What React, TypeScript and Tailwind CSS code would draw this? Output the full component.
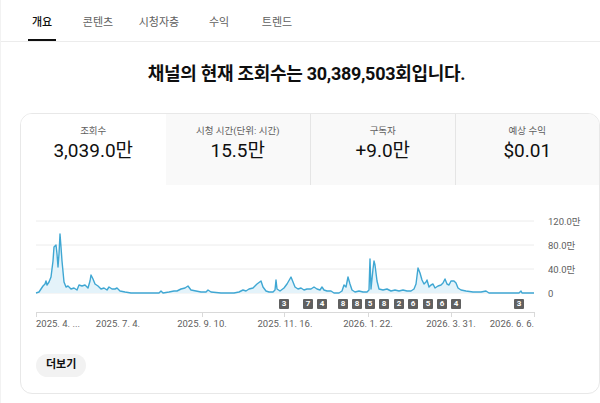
import React from "react";

const FONT = { fontFamily: 'Roboto, "Noto Sans CJK KR", "Noto Sans", sans-serif' };

const TABS = [
  { label: "개요", w: "w-[56px]", active: true },
  { label: "콘텐츠", w: "w-[56px]" },
  { label: "시청자층", w: "w-[66px]" },
  { label: "수익", w: "w-[54px]" },
  { label: "트렌드", w: "w-[62px]" },
];

const METRICS = [
  { label: "조회수", value: "3,039.0만", active: true },
  { label: "시청 시간(단위: 시간)", value: "15.5만" },
  { label: "구독자", value: "+9.0만" },
  { label: "예상 수익", value: "$0.01" },
];

// page coords of the line, x 35..533, baseline y 294
const PTS: [number, number][] = [
  [35, 294], [38, 293], [40, 290], [42, 287], [44, 285], [45, 282], [46, 286], [48, 283], [50, 278],
  [52, 262], [53, 248], [55, 246], [56, 255], [57, 268], [58, 255], [59, 235], [60, 248], [61, 262],
  [63, 283], [65, 288], [67, 287], [70, 290], [73, 289], [76, 291], [78, 286], [81, 287], [84, 286],
  [87, 289], [89, 282], [90, 276], [92, 280], [94, 285], [97, 287], [100, 290], [103, 289], [106, 291],
  [108, 288], [111, 290], [114, 290], [116, 289], [119, 292], [124, 293], [130, 294], [140, 294],
  [150, 294], [158, 294], [160, 292], [162, 294], [168, 293], [173, 292], [176, 292], [180, 290],
  [184, 289], [187, 287], [190, 291], [195, 292], [200, 293], [205, 293], [207, 291], [210, 293],
  [220, 294], [233, 294], [238, 293], [242, 291], [245, 292], [248, 290], [252, 289], [256, 285],
  [260, 282], [262, 288], [265, 292], [268, 293], [272, 293], [274, 291], [275, 281], [276, 290],
  [279, 292], [283, 289], [286, 285], [290, 278], [292, 283], [294, 288], [297, 290], [300, 289],
  [303, 291], [306, 290], [310, 290], [313, 288], [316, 290], [319, 291], [321, 288], [323, 291],
  [326, 292], [330, 292], [333, 294], [338, 294], [341, 292], [343, 286], [345, 288], [347, 278],
  [349, 285], [351, 291], [354, 293], [358, 292], [362, 293], [366, 293], [368, 291], [369, 260],
  [370, 290], [372, 270], [373, 262], [374, 266], [376, 282], [378, 290], [382, 291], [386, 290],
  [390, 292], [394, 291], [398, 292], [402, 291], [406, 292], [410, 292], [413, 290], [415, 285],
  [417, 269], [419, 274], [421, 281], [423, 285], [425, 283], [426, 281], [428, 288], [430, 286],
  [432, 285], [434, 289], [437, 287], [440, 286], [442, 284], [444, 280], [446, 285], [448, 286],
  [450, 282], [453, 282], [455, 284], [457, 289], [460, 291], [465, 292], [472, 293], [480, 293],
  [485, 292], [488, 294], [500, 294], [512, 294], [518, 294], [520, 292], [521, 294], [533, 294],
];

const BADGES = [
  { x: 283, n: "3" }, { x: 307, n: "7" }, { x: 321, n: "4" }, { x: 342, n: "8" },
  { x: 356, n: "8" }, { x: 369, n: "5" }, { x: 383, n: "8" }, { x: 398, n: "2" },
  { x: 412, n: "6" }, { x: 427, n: "5" }, { x: 441, n: "6" }, { x: 455, n: "4" },
  { x: 518, n: "3" },
];

const X_LABELS = [
  { x: 35, t: "2025. 4. ...", anchor: "start" },
  { x: 117, t: "2025. 7. 4.", anchor: "middle" },
  { x: 201, t: "2025. 9. 10.", anchor: "middle" },
  { x: 284, t: "2025. 11. 16.", anchor: "middle" },
  { x: 367, t: "2026. 1. 22.", anchor: "middle" },
  { x: 450, t: "2026. 3. 31.", anchor: "middle" },
  { x: 533, t: "2026. 6. 6.", anchor: "end" },
];

const Y_LABELS = [
  { y: 222, t: "120.0만" },
  { y: 246, t: "80.0만" },
  { y: 270, t: "40.0만" },
  { y: 294, t: "0" },
];

// chart box sits at page (20, 200)
const OX = 20;
const OY = 200;

function Chart() {
  const line = PTS.map(([x, y], i) => `${i ? "L" : "M"}${x - OX} ${y - OY}`).join(" ");
  const area = `${line} L${533 - OX} ${94} L${35 - OX} ${94} Z`;
  return (
    <div className="relative h-[135px] w-full">
      <svg width="579" height="135" className="absolute left-0 top-0" style={FONT}>
        {Y_LABELS.map((l) => (
          <line key={l.t} x1={15} x2={513} y1={l.y - OY} y2={l.y - OY} stroke="#ececec" strokeWidth="1" />
        ))}
        <path d={area} fill="#e4f3fa" />
        <path d={line} fill="none" stroke="#3fa7d3" strokeWidth="1.4" strokeLinejoin="round" />
        <line x1={15} x2={513} y1={113.5} y2={113.5} stroke="#d9d9d9" strokeWidth="1" />
        {[35, 201, 283, 367, 450, 533].map((x) => (
          <line key={x} x1={x - OX + 0.5} x2={x - OX + 0.5} y1={113} y2={118} stroke="#d9d9d9" strokeWidth="1" />
        ))}
        {Y_LABELS.map((l) => (
          <text key={l.t} x={527} y={l.y - OY + 3.5} fontSize="9.5" fill="#606060">
            {l.t}
          </text>
        ))}
        {X_LABELS.map((l) => (
          <text key={l.t} x={l.x - OX} y={128} fontSize="9.5" fill="#606060" textAnchor={l.anchor as "start"}>
            {l.t}
          </text>
        ))}
      </svg>
      {BADGES.map((b, i) => (
        <div
          key={i}
          className="absolute top-[100px] flex h-[10px] w-[10px] items-center justify-center rounded-[1px] bg-[#606060] text-[8px] font-bold leading-none text-white"
          style={{ left: b.x - OX - 5 }}
        >
          {b.n}
        </div>
      ))}
    </div>
  );
}

export default function App() {
  return (
    <div className="min-h-[403px] w-[600px] border-l border-[#f2f2f2] bg-white text-[#0f0f0f]" style={FONT}>
      <nav className="flex h-[42px] items-stretch border-b border-[#ececec] pl-[13px]">
        {TABS.map((t) => (
          <div key={t.label} className={`${t.w} flex justify-center`}>
            <span
              className={`flex items-center border-b-2 px-[4px] pt-[7px] text-[11px] ${
                t.active ? "border-[#0f0f0f] font-medium text-[#0f0f0f]" : "border-transparent text-[#606060]"
              }`}
            >
              {t.label}
            </span>
          </div>
        ))}
      </nav>

      <h1 className="mt-[20px] pl-[12px] text-center text-[18px] font-bold leading-[24px] tracking-[-0.3px]">
        채널의 현재 조회수는 30,389,503회입니다.
      </h1>

      <section className="ml-[19px] mt-[27px] w-[580px] overflow-hidden rounded-[12px] border border-[#e8e8e8]">
        <div className="grid h-[71px] grid-cols-4">
          {METRICS.map((m, i) => (
            <div
              key={m.label}
              className={`flex flex-col items-center pt-[10px] ${
                m.active ? "bg-white" : "bg-[#f9f9f9]"
              } ${i > 1 ? "border-l border-[#e5e5e5]" : ""}`}
            >
              <div className="text-[9.5px] leading-[14px] text-[#606060]">{m.label}</div>
              <div className="mt-[1px] text-[19px] leading-[24px]">{m.value}</div>
            </div>
          ))}
        </div>
        <div className="pt-[14px]">
          <Chart />
        </div>
        <div className="px-[15px] pb-[16px] pt-[17px]">
          <button className="h-[23px] rounded-full bg-[#f2f2f2] px-[10px] text-[11px] font-bold text-[#0f0f0f]">
            더보기
          </button>
        </div>
      </section>
    </div>
  );
}
